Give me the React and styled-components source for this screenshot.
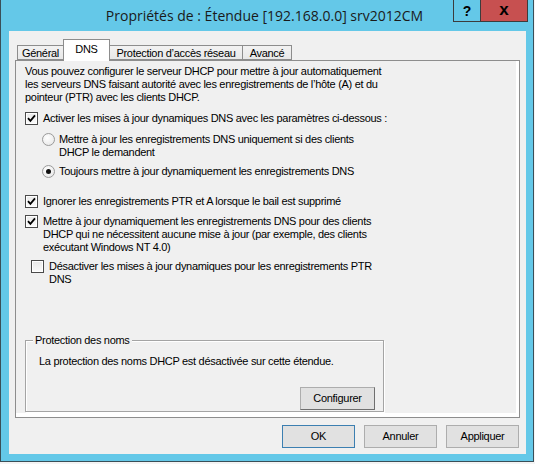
import React from 'react';
import styled, { createGlobalStyle } from 'styled-components';

const GlobalStyle = createGlobalStyle`
  html, body { margin: 0; padding: 0; background: #f4f4f4; }
  body {
    font-family: "Liberation Sans", Arial, sans-serif;
    font-size: 11px;
    color: #000;
    letter-spacing: -0.3px;
  }
`;

const Window = styled.div`
  width: 534px;
  height: 462px;
  box-sizing: border-box;
  background: #64c8e8;
  border: 1px solid #3a4f58;
  border-top: none;
  display: flex;
  flex-direction: column;
`;

const TitleBar = styled.div`
  height: 31px;
  display: grid;
  grid-template-columns: 1fr auto 1fr;
  align-items: center;
  padding-right: 5px;
`;

const Title = styled.div`
  grid-column: 2;
  font-family: "Open Sans", "Liberation Sans", sans-serif;
  font-size: 14px;
  letter-spacing: 0;
  color: #1a1a1a;
  white-space: nowrap;
`;

const Controls = styled.div`
  grid-column: 3;
  justify-self: end;
  align-self: start;
  display: flex;
`;

const CaptionButton = styled.div`
  box-sizing: border-box;
  width: ${p => p.$w}px;
  height: 22px;
  border: 1px solid #3c3c3c;
  border-top: none;
  border-left-width: ${p => (p.$close ? 0 : 1)}px;
  background: ${p => (p.$close ? '#c75050' : '#64c8e8')};
  display: flex;
  align-items: center;
  justify-content: center;
  font-family: "Liberation Sans", Arial, sans-serif;
  font-weight: bold;
  font-size: ${p => (p.$close ? 17 : 14)}px;
  line-height: 1;
  padding-bottom: ${p => (p.$close ? 3 : 0)}px;
  letter-spacing: 0;
  color: #000;
`;

const Client = styled.div`
  width: 517px;
  height: 423px;
  margin-left: 8px;
  box-sizing: border-box;
  background: #f0f0f0;
  padding: 8px 6px 0 6px;
  display: flex;
  flex-direction: column;
`;

const TabStrip = styled.div`
  height: 21px;
  display: flex;
  align-items: flex-end;
  padding-left: 2px;
  position: relative;
  z-index: 1;
`;

const Tab = styled.div`
  box-sizing: border-box;
  width: ${p => p.$w}px;
  height: ${p => (p.$active ? 22 : 15)}px;
  margin-bottom: ${p => (p.$active ? -1 : 0)}px;
  border: 1px solid #8d8d8d;
  border-bottom: ${p => (p.$active ? 'none' : '1px solid #8d8d8d')};
  border-left-width: ${p => (p.$first || p.$active ? 1 : 0)}px;
  border-right-width: ${p => (p.$beforeActive ? 0 : 1)}px;
  background: ${p => (p.$active ? '#ffffff' : 'linear-gradient(#f2f2f2, #e8e8e8)')};
  display: flex;
  justify-content: center;
  align-items: ${p => (p.$active ? 'flex-start' : 'center')};
  padding-top: ${p => (p.$active ? 3 : 0)}px;
  white-space: nowrap;
`;

const Panel = styled.div`
  box-sizing: border-box;
  height: 358px;
  border: 1px solid #8d8d8d;
  background: #ffffff;
  padding: 0 3px 4px 0;
  display: flex;
`;

const Page = styled.div`
  flex: 1;
  background: #f0f0f0;
  padding: 4px 0 1px 9px;
  display: flex;
  flex-direction: column;
  line-height: 13px;
`;

const Paragraph = styled.p`
  margin: 0;
`;

const Row = styled.div`
  display: flex;
  align-items: flex-start;
  margin-top: ${p => p.$mt}px;
  margin-left: ${p => p.$indent || 0}px;
`;

const Box = styled.span`
  box-sizing: border-box;
  flex: none;
  width: 13px;
  height: 13px;
  margin-right: 5px;
  border: 1px solid #4a4a4a;
  background: linear-gradient(#e9e9e9, #fbfbfb);
  box-shadow: inset 0 0 0 1px #ffffff;
  display: flex;
  align-items: center;
  justify-content: center;
`;

const Radio = styled.span`
  box-sizing: border-box;
  flex: none;
  width: 13px;
  height: 13px;
  margin-right: 4px;
  border-radius: 50%;
  border: 1px solid #9a9a9a;
  background: radial-gradient(circle at 40% 35%, #ffffff, #e4e4e4);
  display: flex;
  align-items: center;
  justify-content: center;
`;

const Dot = styled.span`
  width: 5px;
  height: 5px;
  border-radius: 50%;
  background: #111;
`;

const Group = styled.section`
  box-sizing: border-box;
  width: 359px;
  height: 72px;
  margin-top: auto;
  padding: 0 8px 1px 13px;
  border: 1px solid #a4a4a4;
  box-shadow: inset 1px 1px 0 #ffffff, 1px 1px 0 #ffffff;
  display: flex;
  flex-direction: column;
`;

const GroupLabel = styled.span`
  align-self: flex-start;
  margin: -7px 0 0 -6px;
  padding: 0 2px;
  background: #f0f0f0;
  line-height: 13px;
`;

const GroupText = styled.div`
  margin-top: 8px;
`;

const Button = styled.div`
  box-sizing: border-box;
  width: ${p => p.$w || 73}px;
  height: 23px;
  background: #e1e1e1;
  border: 1px solid ${p => (p.$default ? '#3c7fb1' : '#adadad')};
  border-right-color: ${p => (p.$raised ? '#6f6f6f' : p.$default ? '#3c7fb1' : '#adadad')};
  border-bottom-color: ${p => (p.$raised ? '#6f6f6f' : p.$default ? '#3c7fb1' : '#adadad')};
  display: flex;
  align-items: center;
  justify-content: center;
  line-height: 13px;
`;

const GroupButton = styled(Button)`
  margin-top: auto;
  align-self: flex-end;
`;

const Footer = styled.div`
  display: flex;
  justify-content: flex-end;
  gap: 9px;
  margin-top: 7px;
  padding-right: 1px;
`;

const Check = () => (
  <Box>
    <svg width="9" height="9" viewBox="0 0 9 9">
      <path d="M1 4.2 L3.4 6.8 L8 1.4" fill="none" stroke="#000" strokeWidth="1.8" />
    </svg>
  </Box>
);

export default function App() {
  return (
    <>
      <GlobalStyle />
      <Window>
        <TitleBar>
          <Title>Propriétés de : Étendue [192.168.0.0] srv2012CM</Title>
          <Controls>
            <CaptionButton $w={28}>?</CaptionButton>
            <CaptionButton $w={47} $close>x</CaptionButton>
          </Controls>
        </TitleBar>
        <Client>
          <TabStrip>
            <Tab $w={46} $first $beforeActive>Général</Tab>
            <Tab $w={47} $active>DNS</Tab>
            <Tab $w={133}>Protection d’accès réseau</Tab>
            <Tab $w={49}>Avancé</Tab>
          </TabStrip>
          <Panel>
            <Page>
              <Paragraph>
                Vous pouvez configurer le serveur DHCP pour mettre à jour automatiquement<br />
                les serveurs DNS faisant autorité avec les enregistrements de l’hôte (A) et du<br />
                pointeur (PTR) avec les clients DHCP.
              </Paragraph>
              <Row $mt={8}>
                <Check />
                <span>Activer les mises à jour dynamiques DNS avec les paramètres ci-dessous :</span>
              </Row>
              <Row $mt={8} $indent={17}>
                <Radio />
                <span>
                  Mettre à jour les enregistrements DNS uniquement si des clients<br />
                  DHCP le demandent
                </span>
              </Row>
              <Row $mt={6} $indent={17}>
                <Radio><Dot /></Radio>
                <span>Toujours mettre à jour dynamiquement les enregistrements DNS</span>
              </Row>
              <Row $mt={17}>
                <Check />
                <span>Ignorer les enregistrements PTR et A lorsque le bail est supprimé</span>
              </Row>
              <Row $mt={7}>
                <Check />
                <span>
                  Mettre à jour dynamiquement les enregistrements DNS pour des clients<br />
                  DHCP qui ne nécessitent aucune mise à jour (par exemple, des clients<br />
                  exécutant Windows NT 4.0)
                </span>
              </Row>
              <Row $mt={6} $indent={6}>
                <Box />
                <span>
                  Désactiver les mises à jour dynamiques pour les enregistrements PTR<br />
                  DNS
                </span>
              </Row>
              <Group>
                <GroupLabel>Protection des noms</GroupLabel>
                <GroupText>La protection des noms DHCP est désactivée sur cette étendue.</GroupText>
                <GroupButton $w={75} $raised>Configurer</GroupButton>
              </Group>
            </Page>
          </Panel>
          <Footer>
            <Button $default>OK</Button>
            <Button>Annuler</Button>
            <Button>Appliquer</Button>
          </Footer>
        </Client>
      </Window>
    </>
  );
}
